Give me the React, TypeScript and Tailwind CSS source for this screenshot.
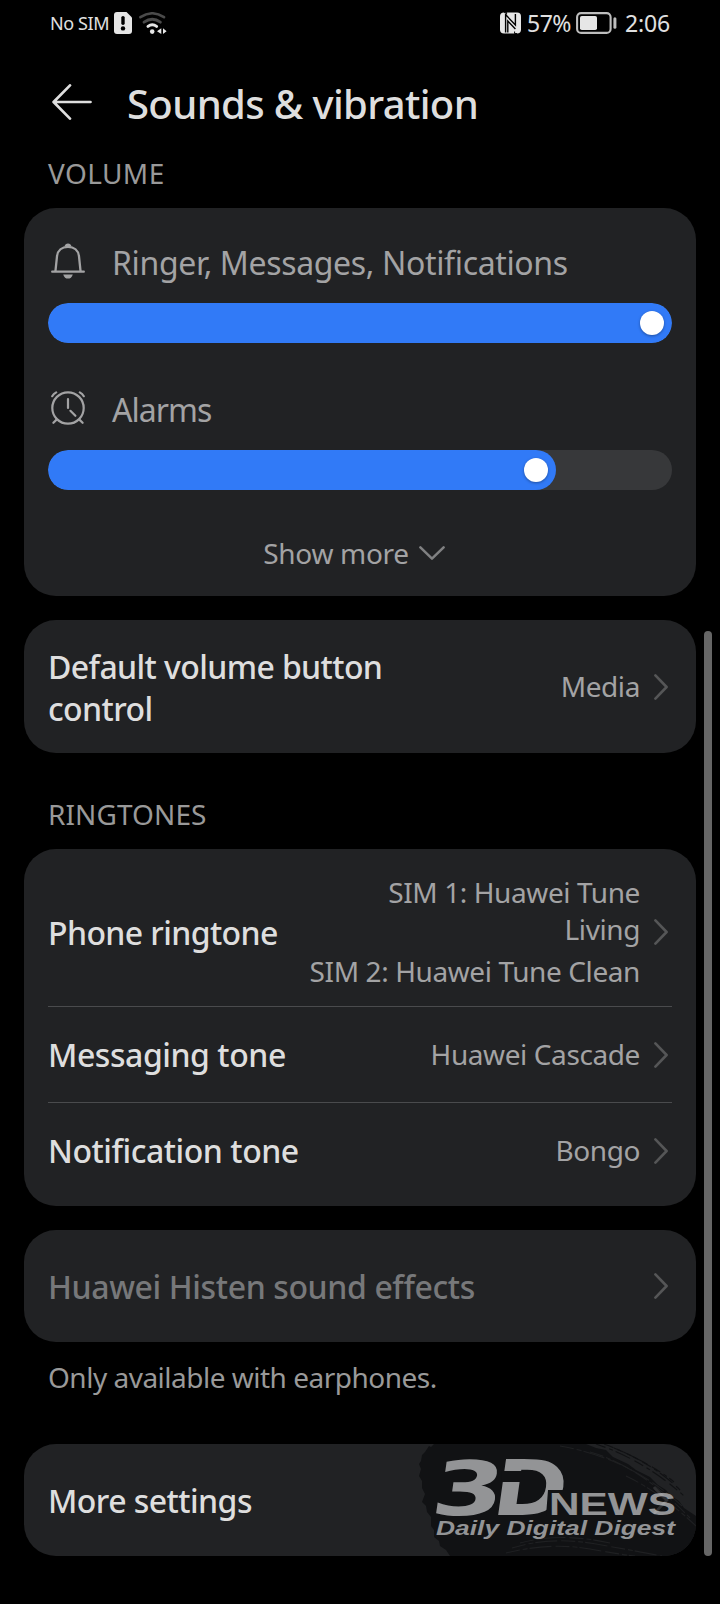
import React from "react";

const SimAlertIcon = () => (
  <svg className="w-[18px] h-[22px]" viewBox="0 0 18 22">
    <path d="M3 0H12.5L18 5.5V19a3 3 0 0 1-3 3H3a3 3 0 0 1-3-3V3a3 3 0 0 1 3-3Z" fill="#e6e6e6" />
    <path d="M9 5.6V11.2" stroke="#000" strokeWidth="3.4" strokeLinecap="round" />
    <circle cx="9" cy="16.4" r="2.2" fill="#000" />
  </svg>
);

const WifiIcon = () => (
  <svg className="w-7 h-[22px]" viewBox="0 0 28 22" fill="none" strokeLinecap="round">
    <path d="M1.4 5.2Q13.3-2.6 25 5.2" stroke="#4a4a4a" strokeWidth="2.6" />
    <path d="M5 10.2Q13.3 4.2 21.4 10.2" stroke="#4a4a4a" strokeWidth="2.8" />
    <path d="M9 14.4Q13.3 11.2 17.6 14.4" stroke="#e6e6e6" strokeWidth="3" />
    <circle cx="13.2" cy="19.6" r="2.3" fill="#e6e6e6" />
    <path d="M18 19.2L22.3 16.2V22ZM24 16.2V22L27.6 19.2Z" fill="#e6e6e6" />
  </svg>
);

const NfcIcon = () => (
  <svg className="w-[21px] h-[22px]" viewBox="0 0 21 22">
    <rect x="0" y="0.5" width="21" height="21" rx="4" fill="#e6e6e6" />
    <path d="M5.6 20.5V2.6L15.4 13V2" fill="none" stroke="#000" strokeWidth="1.4" />
    <path d="M7.8 20.5V9L15.4 17" fill="none" stroke="#000" strokeWidth="1.4" />
    <path d="M4 0.3H6.6V2.5M17 21.6H14.6V19.5" fill="none" stroke="#000" strokeWidth="1" />
  </svg>
);

const BatteryIcon = () => (
  <svg className="w-[41px] h-[22px]" viewBox="0 0 41 22">
    <rect x="1.1" y="1.1" width="33.5" height="19.8" rx="4" fill="none" stroke="#bdbdbd" strokeWidth="2.1" />
    <rect x="4" y="4" width="17" height="14" rx="1.8" fill="#e6e6e6" />
    <path d="M38.9 6.8V15.2" stroke="#bdbdbd" strokeWidth="3" strokeLinecap="round" />
  </svg>
);

const BackIcon = () => (
  <svg className="w-10 h-9" viewBox="0 0 40 36" fill="none" stroke="#dedede" strokeWidth="2.7" strokeLinecap="round">
    <path d="M18 1.4L1.6 18L18 34.6M2 18H38.5" strokeLinejoin="round" />
  </svg>
);

const BellIcon = () => (
  <svg className="w-[34px] h-9" viewBox="0 0 34 36" fill="none" stroke="#a3a3a4" strokeWidth="2.3">
    <path d="M4.4 28.6L6 13.4C6.6 7.4 11 3.8 17 3.8S27.4 7.4 28 13.4L29.6 28.6" />
    <path d="M1.2 28.7H32.8" strokeLinecap="round" />
    <path d="M12.2 31.4H21.8C21 34.2 19.2 35.6 17 35.6S13 34.2 12.2 31.4ZM13.4 3.6C14 1.4 15.2 0.4 17 0.4S20 1.4 20.6 3.6Z" fill="#a3a3a4" stroke="none" />
  </svg>
);

const AlarmIcon = () => (
  <svg className="w-[34px] h-[34px]" viewBox="0 0 34 34" fill="none" stroke="#a3a3a4" strokeWidth="2.2" strokeLinecap="round">
    <circle cx="17" cy="17" r="15.7" />
    <path d="M17 8V17M19.4 19.8L24.4 24.8" />
    <path d="M1.2 5.2Q2.6 2.8 5.2 1.4M32.8 5.2Q31.4 2.8 28.8 1.4M5.6 28.6L2.4 31.8M28.4 28.6L31.6 31.8" />
  </svg>
);

const Chevron = () => (
  <svg className="w-3.5 h-[26px] ml-3.5 mr-1 shrink-0" viewBox="0 0 14 26" fill="none" stroke="#555657" strokeWidth="2.6" strokeLinecap="round" strokeLinejoin="round">
    <path d="M1.4 1.4L12.6 13L1.4 24.6" />
  </svg>
);

const Slider = ({ value }: { value: number }) => (
  <div className="h-10 rounded-full bg-[#37383a] overflow-hidden">
    <div
      className="h-10 rounded-full bg-[#317af7] flex items-center justify-end pr-2"
      style={{ width: `${value}%` }}
    >
      <div className="size-6 rounded-full bg-white shadow-[0_1px_3px_rgba(0,0,0,0.35)]" />
    </div>
  </div>
);

const NewsLogo = () => (
  <svg className="absolute right-0 top-0 w-[296px] h-28" viewBox="0 0 296 112">
    <path
      d="M34 0L31 3L29 2L25 8L22 11L21 17L19 20L21 25L19 32L22 37L22 44L25 50L22 58L26 62L27 68L31 73L31 82L34 86L34 93L39 97L40 102L46 106L50 112H296V72L284 64L279 57L270 51L266 46L258 41L250 33L236 26L228 20L213 13L206 6L196 4L186 0Z"
      fill="#111214"
    />
    <g stroke="#1f2022" strokeWidth="1.1" fill="none" strokeDasharray="14 3 5 2 22 4">
      <path d="M160 2Q230 14 282 62" />
      <path d="M190 8Q240 22 290 74" />
      <path d="M226 32Q260 48 296 82" />
      <path d="M112 104Q150 92 196 100T262 112" />
      <path d="M106 109Q150 98 190 105T235 112" />
      <path d="M120 99Q160 88 210 99" />
    </g>
    <g stroke="#111214" strokeWidth="1.1" fill="none" strokeDasharray="10 4 4 3 16 5">
      <path d="M196 0Q244 16 284 52" />
      <path d="M204 0Q252 18 280 46" />
      <path d="M214 4Q252 20 274 38" />
    </g>
    <g fill="#939496" fontFamily="'DejaVu Sans', sans-serif" fontWeight="700">
      <text transform="translate(29 70.5) skewX(-8)" fontSize="75" textLength="72" lengthAdjust="spacingAndGlyphs">3</text>
      <text transform="translate(90 71) skewX(-8)" fontSize="77" textLength="74" lengthAdjust="spacingAndGlyphs">D</text>
    </g>
    <path d="M102 27H134V38H101ZM148 46H180V72H146Z" fill="#111214" />
    <g fill="#939496" fontFamily="'Liberation Sans', Arial, sans-serif" fontWeight="700">
      <text x="149" y="71" fontSize="32" textLength="127" lengthAdjust="spacingAndGlyphs">NEWS</text>
      <text x="36" y="90.5" fontSize="19.5" fontStyle="italic" textLength="239" lengthAdjust="spacingAndGlyphs">Daily Digital Digest</text>
    </g>
    <path d="M254.5 44L267 56L254.5 69" fill="none" stroke="#ffffff" strokeOpacity="0.12" strokeWidth="2.6" strokeLinecap="round" />
  </svg>
);

const titleClass = "text-[32px] leading-[42px] font-medium text-[#dedede]";
const valueClass = "text-[28px] leading-[37px] tracking-[-0.4px] text-[#a3a3a4] text-right";

export default function App() {
  return (
    <div className="relative w-[720px] h-[1604px] bg-black overflow-hidden font-['Noto_Sans',sans-serif]">
      {/* Status bar */}
      <div className="h-[46px] flex items-center justify-between pl-[50px] pr-[51px] text-[#e0e0e0]">
        <div className="flex items-center">
          <span className="pt-px text-[18px] tracking-[-0.4px] w-16 whitespace-nowrap">No SIM</span>
          <SimAlertIcon />
          <div className="ml-[7px]">
            <WifiIcon />
          </div>
        </div>
        <div className="flex items-center text-[23px]">
          <NfcIcon />
          <span className="ml-[6px] pt-px w-[49px] tracking-[-0.5px] whitespace-nowrap">57%</span>
          <BatteryIcon />
          <span className="ml-[8px] pt-px w-[44px] whitespace-nowrap tracking-[-0.2px]">2:06</span>
        </div>
      </div>

      {/* Header */}
      <div className="h-[112px] flex items-center pl-[52px]">
        <BackIcon />
        <h1 className="ml-[35px] pt-[3px] text-[40px] font-medium tracking-[-0.63px] text-[#dedede] whitespace-nowrap">
          Sounds &amp; vibration
        </h1>
      </div>

      {/* Volume */}
      <div className="h-[50px] pl-12 text-[28px] leading-[30px] tracking-[0.4px] text-[#999999]">VOLUME</div>
      <div className="mx-6 h-[388px] px-6 rounded-[32px] bg-[#212224]">
        <div className="h-[95px] pt-2.5 pl-[3px] flex items-center">
          <BellIcon />
          <span className="ml-[27px] pt-1 text-[32px] tracking-[-0.35px] text-[#a3a3a4] whitespace-nowrap">
            Ringer, Messages, Notifications
          </span>
        </div>
        <Slider value={100} />
        <div className="h-[107px] pt-[22px] pl-[3px] flex items-center">
          <AlarmIcon />
          <span className="ml-[27px] pt-1 text-[32px] tracking-[-0.95px] text-[#a3a3a4]">Alarms</span>
        </div>
        <Slider value={81.4} />
        <div className="h-[106px] pt-5 pr-3 flex items-center justify-center">
          <span className="text-[28px] tracking-[-0.3px] text-[#a3a3a4]">Show more</span>
          <svg className="w-[26px] h-3.5 ml-2.5" viewBox="0 0 26 14" fill="none" stroke="#808182" strokeWidth="2.5" strokeLinecap="round" strokeLinejoin="round">
            <path d="M1.4 1.4L13 12.6L24.6 1.4" />
          </svg>
        </div>
      </div>

      <div className="mx-6 mt-6 h-[133px] px-6 rounded-[32px] bg-[#212224] flex items-center">
        <div className={`${titleClass} pt-0.5 w-[360px] tracking-[-0.6px]`}>Default volume button control</div>
        <div className={`${valueClass} ml-auto`}>Media</div>
        <Chevron />
      </div>

      {/* Ringtones */}
      <div className="h-24 pt-[42px] pl-12 text-[28px] leading-[38px] tracking-[0.1px] text-[#999999]">RINGTONES</div>
      <div className="mx-6 px-6 py-2 rounded-[32px] bg-[#212224]">
        <div className="h-[149px] flex items-center">
          <div className={`${titleClass} pt-0.5 tracking-[-0.6px] whitespace-nowrap`}>Phone ringtone</div>
          <div className={`${valueClass} ml-auto whitespace-nowrap`}>
            <p>
              SIM 1: Huawei Tune
              <br />
              Living
            </p>
            <p className="mt-[5px]">SIM 2: Huawei Tune Clean</p>
          </div>
          <Chevron />
        </div>
        <div className="h-24 flex items-center border-t border-[#4a4b4d]">
          <div className={`${titleClass} tracking-[-0.45px]`}>Messaging tone</div>
          <div className={`${valueClass} ml-auto`}>Huawei Cascade</div>
          <Chevron />
        </div>
        <div className="h-24 flex items-center border-t border-[#4a4b4d]">
          <div className={`${titleClass} tracking-[-0.45px]`}>Notification tone</div>
          <div className={`${valueClass} ml-auto`}>Bongo</div>
          <Chevron />
        </div>
      </div>

      {/* Sound effects, disabled without earphones */}
      <div className="mx-6 mt-6 h-28 px-6 rounded-[32px] bg-[#212224] flex items-center justify-between">
        <div className="pt-0.5 text-[32px] font-medium tracking-[-0.38px] text-[#77787a]">Huawei Histen sound effects</div>
        <Chevron />
      </div>
      <div className="h-[102px] pt-4 pl-12 text-[28px] leading-[38px] tracking-[-0.5px] text-[#999999]">
        Only available with earphones.
      </div>

      <div className="relative mx-6 h-28 px-6 rounded-[32px] bg-[#212224] overflow-hidden flex items-center">
        <div className={`${titleClass} pt-0.5 tracking-[-0.55px]`}>More settings</div>
        <NewsLogo />
      </div>

      {/* Scrollbar */}
      <div className="absolute right-2 top-[631px] w-2 h-[925px] rounded-full bg-[#666666]" />
    </div>
  );
}
